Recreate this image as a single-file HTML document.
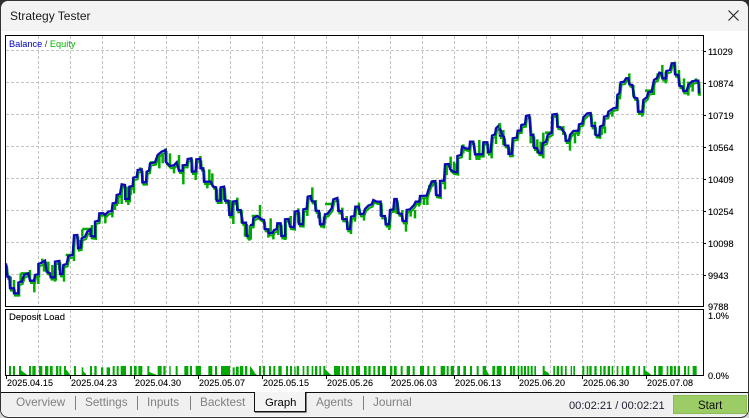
<!DOCTYPE html>
<html><head><meta charset="utf-8"><style>
html,body{margin:0;padding:0;width:749px;height:418px;overflow:hidden;background:#d8d8d8}
svg{display:block}
text{font-family:"Liberation Sans",sans-serif}
.d{font-size:9px;fill:#000;letter-spacing:.1px;stroke:#000;stroke-width:.12px}
.r{font-size:9.2px;fill:#000;stroke:#000;stroke-width:.12px}
.t{font-size:11.8px;fill:#808080}
</style></head><body>
<svg width="749" height="418" viewBox="0 0 749 418" xmlns="http://www.w3.org/2000/svg">
<rect width="749" height="200" fill="#2e2e2e"/>
<rect x="0.5" y="0.5" width="748" height="417" rx="8" fill="#ffffff" stroke="#333"/>
<path d="M1 31V9Q1 1 9 1H740Q748 1 748 9V31Z" fill="#f3f3f3"/>
<path d="M1 393H748V409Q748 416.500 740 416.500H9Q1 416.500 1 409Z" fill="#f0f0f0"/>
<text x="10" y="20" font-size="12" fill="#1a1a1a">Strategy Tester</text>
<path d="M728.500 10.500L738.500 20.500M738.500 10.500L728.500 20.500" stroke="#222" stroke-width="1.100" fill="none"/>

<!-- grid -->
<g stroke="#c4c4c4" stroke-width="1" stroke-dasharray="3 2" fill="none">
<path d="M6 50.500H703M6 82.500H703M6 114.500H703M6 146.500H703M6 178.500H703M6 210.500H703M6 242.500H703M6 274.500H703"/>
<path d="M38.500 36V306M70.500 36V306M102.500 36V306M134.500 36V306M166.500 36V306M198.500 36V306M230.500 36V306M262.500 36V306M294.500 36V306M326.500 36V306M358.500 36V306M390.500 36V306M422.500 36V306M454.500 36V306M486.500 36V306M518.500 36V306M550.500 36V306M582.500 36V306M614.500 36V306M646.500 36V306M678.500 36V306"/>
<path d="M38.500 310V375M70.500 310V375M102.500 310V375M134.500 310V375M166.500 310V375M198.500 310V375M230.500 310V375M262.500 310V375M294.500 310V375M326.500 310V375M358.500 310V375M390.500 310V375M422.500 310V375M454.500 310V375M486.500 310V375M518.500 310V375M550.500 310V375M582.500 310V375M614.500 310V375M646.500 310V375M678.500 310V375"/>
</g>

<!-- segment 1 -->
<g transform="translate(0,130) scale(.33333)" fill="none" stroke-linejoin="miter">
<g stroke="#00aa00" stroke-width="6" transform="translate(3,7)"><use href="#b1"/></g>
<path stroke="#00aa00" stroke-width="7.500" d="M32 440V475M42 450V490M55 480V498M62 430V455M62 430H85M90 420V450M103 450V487M115 430V462M127 386V400M132 400V425M145 395V430M157 405V450M165 420V455M178 390V420M192 405V455M197 375H215M222 355V393M240 330V360M247 298V320M247 297H272M276 285V320M316 255V280M337 228V262M345 220V240M355 195V222M365 165V222M385 170V225M392 170V195M402 165V190M417 116H425M440 125V160M450 97H465M478 75V115M488 70V100M497 55V70M510 70V110M522 105V130M537 75V120M550 105V163M575 85V125M587 120V150M601 78V118M622 155V175M628 118V155M637 130V170M648 170V210M660 175V210M672 168V210M690 210V255M700 215V282M712 203V240M725 240V280M735 280V320M748 320V332"/>
<g stroke="#0a0ab0" stroke-width="7"><polyline id="b1" points="18,400 22,440 28,440 30,475 42,475 42,490 55,490 55,458 65,455 72,435 85,430 90,452 102,452 105,435 115,432 115,402 125,398 135,392 140,425 150,430 152,442 165,442 165,395 178,393 180,432 188,432 190,405 200,402 205,378 218,375 222,316 232,315 234,355 242,353 245,325 255,320 262,305 272,298 272,318 285,320 285,275 296,272 298,250 310,250 315,255 325,245 335,243 338,220 348,218 350,195 360,192 365,163 375,165 375,207 387,207 388,170 398,168 400,143 410,141 413,120 425,118 427,157 438,157 440,125 447,122 450,100 465,97 473,75 485,65 497,60 497,95 510,108 522,106 530,97 537,122 548,122 548,106 560,105 563,87 574,85 576,125 587,124 589,88 601,87 603,115 610,115 612,155 632,155 640,170 648,172 650,212 662,212 662,172 672,170 675,212 685,212 688,255 695,255 698,215 710,213 712,240 722,240 727,278 738,278 740,318 750,318 750,285"/></g>
</g>
<!-- segment 2 -->
<g transform="translate(250,110) scale(.33333)" fill="none">
<g stroke="#00aa00" stroke-width="6" transform="translate(3,7)"><use href="#b2"/></g>
<path stroke="#00aa00" stroke-width="7.500" d="M0 345V390M5 318H22M30 285V325M55 375V383M62 325V365M70 370V388M85 340V375M105 378V390M122 318V350M133 350V358M145 295V340M160 325V350M172 300V318M187 232V270M197 270V302M205 310V325M222 320V355M225 282H245M277 293V325M290 318V330M303 330V372M315 315V335M327 278V315M342 310V332M392 280V318M418 343V360M428 295V305M440 267V312M457 300V333M468 335V365M482 300V320M495 300V325M507 270V290M522 262V285M532 255V285M538 225V245M548 210V230M567 255V262M585 215V238M590 165V195M602 140V175M612 155V192M620 160V195M640 103V130M660 120V150M680 135V150M688 90V150M700 130V143M725 95V145M738 75V102M748 40V60"/>
<g stroke="#0a0ab0" stroke-width="7"><polyline id="b2" points="0,345 8,345 10,325 22,318 35,328 42,330 44,357 55,358 55,370 68,368 72,360 80,358 82,340 92,340 94,378 105,378 105,328 115,327 120,350 132,352 134,305 145,303 147,342 158,343 160,298 170,296 173,260 182,258 185,273 195,275 197,302 207,303 210,343 220,343 225,313 232,312 245,295 250,268 262,264 265,303 275,303 277,327 290,328 292,357 300,357 303,320 313,318 316,290 326,290 330,312 340,312 345,297 355,287 365,283 370,270 380,275 392,275 394,318 405,318 407,343 417,343 420,300 430,298 433,267 440,267 445,310 455,312 458,333 468,333 470,300 480,298 492,285 497,275 508,275 510,258 530,257 535,240 545,215 556,213 558,255 570,257 570,213 582,212 585,163 597,162 600,177 610,185 622,187 622,138 633,135 636,110 648,115 658,117 660,95 670,95 675,133 698,133 700,97 712,97 714,127 722,125 726,77 735,73 738,55 748,45 750,80"/></g>
</g>
<!-- segment 3 -->
<g transform="translate(500,40) scale(.33333)" fill="none">
<g stroke="#00aa00" stroke-width="6" transform="translate(3,7)"><use href="#b3"/></g>
<path stroke="#00aa00" stroke-width="7.500" d="M0 250V285M10 270V315M25 315V345M40 345V348M55 270V285M92 285V310M100 280V320M112 298V340M122 305V340M130 278V355M135 278H155M172 222V255M190 258V285M210 290V332M225 280V310M235 270V288M250 245V255M285 245V285M305 255V285M315 260V280M337 210V230M360 130V178M388 100V125M400 135V170M427 215V230M435 152H455M462 125V165M473 100V125M487 75V115M497 95V130M525 65V90M537 90V135M552 115V158M565 125V167M578 120V155M588 115V125M597 125V167"/>
<g stroke="#0a0ab0" stroke-width="7"><polyline id="b3" points="0,265 8,288 12,290 14,315 25,317 27,342 35,342 38,295 50,293 53,272 62,272 64,255 75,253 78,228 88,226 92,285 100,285 102,323 112,325 115,338 125,340 128,310 138,305 143,285 155,278 157,224 170,222 172,260 182,262 195,280 197,302 207,302 210,285 220,273 235,272 237,253 247,250 250,232 262,220 272,219 275,258 285,258 287,285 298,287 300,260 310,255 312,230 322,228 325,215 340,205 350,203 352,165 358,160 362,127 372,125 378,115 385,115 388,133 397,135 402,172 412,175 414,215 427,215 430,180 440,172 445,157 455,155 462,120 470,115 478,98 485,100 487,115 497,115 499,93 510,90 515,70 523,70 525,103 535,105 538,137 548,140 550,153 560,153 565,135 575,125 585,122 595,122 597,160"/></g>
</g>

<!-- deposit load bars -->
<g transform="translate(0,290) scale(.33333)" fill="#00aa00">
<path d="M27 256V228H33V256ZM39 256V228H45V256ZM57 256V228H63V240L72 248L80 253V256ZM87 256V228H93V256ZM97 256V228H107V256ZM117 256V228H127V256ZM135 256V228H145V256ZM150 256V228H158V256ZM168 256V228H175V256ZM178 256V228H184V256ZM192 256V228H198V238L206 248L212 256ZM222 256V228H228V256ZM245 256V232H250V244L258 252V256ZM270 256V228H276V256ZM283 256V228H290V256ZM303 256V232H310V256ZM320 256V232H330V256ZM338 256V228H344V256ZM350 256V228H356V256ZM362 256V228H378V256ZM390 256V228H396V256ZM402 256V228H410V256ZM415 256V228H427V256ZM442 256V228H448V246L458 250L468 254V256ZM473 256V228H485V256ZM490 256V228H497V256ZM508 256V228H512V256ZM527 256V228H533V256ZM553 256V228H565V256ZM570 256V228H576V256ZM587 256V228H603V256ZM625 256V228H637V256ZM645 256V228H651V256ZM663 256V228H690V256ZM698 256V232H704V256ZM708 256V230H716V256ZM720 256V228H730V256ZM735 256V228H742V256Z"/>
</g>
<g transform="translate(250,290) scale(.33333)" fill="#00aa00">
<path d="M0 256V228L8 238L15 250L22 256ZM27 256V228H33V256ZM39 256V228H45V256ZM57 256V228H63V256ZM70 256V228H76V256ZM85 256V228H95V256ZM108 256V228H114V256ZM120 256V228H126V256ZM133 256V230H137V256ZM140 256V228H147V256ZM158 256V228H163V256ZM170 256V228H176V256ZM185 256V228H190V256ZM195 256V228H202V256ZM208 256V228H213V256ZM220 256V228H226V238L236 248L245 256ZM252 256V228H270V256ZM275 256V228H281V256ZM288 256V228H296V256ZM305 256V228H311V256ZM318 256V228H330V256ZM342 256V228H350V256ZM355 256V228H362V256ZM370 256V228H376V256ZM383 256V228H390V256ZM396 256V228H408V256ZM420 256V228H427V256ZM432 256V228H440V256ZM452 256V228H458V256ZM470 256V228H480V256ZM488 256V228H494V256ZM510 256V228H522V256ZM532 256V228H538V256ZM550 256V228H556V256ZM572 256V228H585V256ZM590 256V228H596V256ZM602 256V228H612V256ZM622 256V228H630V256ZM640 256V228H648V256ZM660 256V228H666V256ZM680 256V228H686V256ZM698 256V228H708V238L718 256ZM727 256V228H735V256ZM740 256V228H750V256Z"/>
</g>
<g transform="translate(500,290) scale(.33333)" fill="#00aa00">
<path d="M0 256V228H5V256ZM12 256V228H18V256ZM30 256V228H36V256ZM38 256V228H45V256ZM53 256V228H58V256ZM62 256V228H68V256ZM72 256V228H78V256ZM82 256V228H88V256ZM92 256V228H98V256ZM103 256V228H108V256ZM128 256V228H134V242L144 248L150 256ZM160 256V228H165V256ZM170 256V228H177V256ZM182 256V228H188V256ZM195 256V228H200V256ZM212 256V228H216V256ZM220 256V228H225V256ZM247 256V228H253V256ZM260 256V228H265V256ZM268 256V228H275V256ZM283 256V228H290V256ZM300 256V228H305V256ZM310 256V228H317V256ZM323 256V228H330V256ZM335 256V228H340V256ZM350 256V228H355V256ZM365 256V228H370V256ZM378 256V228H388V256ZM398 256V228H405V256ZM415 256V228H420V256ZM430 256V228H436V242L446 248L455 256ZM462 256V228H468V256ZM475 256V228H488V256ZM500 256V228H505V256ZM510 256V228H518V256ZM522 256V228H528V256ZM533 256V228H540V256ZM552 256V228H558V256ZM563 256V228H568V256ZM578 256V228H590V256Z"/>
</g>

<!-- frames -->
<g fill="none" stroke="#000" stroke-width="1">
<rect x="5.500" y="35.500" width="698" height="271"/>
<rect x="5.500" y="309.500" width="698" height="66"/>
<path d="M704 51.500H706M704 83.500H706M704 115.500H706M704 147.500H706M704 179.500H706M704 211.500H706M704 243.500H706M704 275.500H706"/>
<path d="M6.500 376V379M70.500 376V379M134.500 376V379M198.500 376V379M262.500 376V379M326.500 376V379M390.500 376V379M454.500 376V379M518.500 376V379M582.500 376V379M646.500 376V379"/>
</g>

<text x="9" y="47" font-size="9.200"><tspan fill="#0000c8">Balance</tspan><tspan fill="#333"> / </tspan><tspan fill="#00b400">Equity</tspan></text>
<text x="9" y="320" font-size="9.500" fill="#000" stroke="#000" stroke-width=".1">Deposit Load</text>

<text class="r" x="708" y="55">11029</text>
<text class="r" x="708" y="87">10874</text>
<text class="r" x="708" y="119">10719</text>
<text class="r" x="708" y="151">10564</text>
<text class="r" x="708" y="183">10409</text>
<text class="r" x="708" y="215">10254</text>
<text class="r" x="708" y="247">10098</text>
<text class="r" x="708" y="279">9943</text>
<text class="r" x="708" y="310">9788</text>
<rect x="706" y="311" width="40" height="9" fill="#fff"/>
<text class="r" x="708" y="319">1.0%</text>
<text class="r" x="708" y="379">0.0%</text>

<text class="d" x="7" y="386">2025.04.15</text>
<text class="d" x="71" y="386">2025.04.23</text>
<text class="d" x="135" y="386">2025.04.30</text>
<text class="d" x="199" y="386">2025.05.07</text>
<text class="d" x="263" y="386">2025.05.15</text>
<text class="d" x="327" y="386">2025.05.26</text>
<text class="d" x="391" y="386">2025.06.03</text>
<text class="d" x="455" y="386">2025.06.13</text>
<text class="d" x="519" y="386">2025.06.20</text>
<text class="d" x="583" y="386">2025.06.30</text>
<text class="d" x="647" y="386">2025.07.08</text>

<!-- tab bar -->
<path d="M1 392.500H748" stroke="#111" fill="none"/>
<text class="t" x="16" y="406">Overview</text>
<text class="t" x="85" y="406">Settings</text>
<text class="t" x="147" y="406">Inputs</text>
<text class="t" x="200" y="406">Backtest</text>
<path d="M75.500 396V410M137.500 396V410M190.500 396V410M363.500 396V410" stroke="#808080" fill="none"/>
<path d="M254.500 392V411.500H305.500V392" fill="#f4f4f4" stroke="#111"/>
<path d="M306 393V412H255" fill="none" stroke="#111"/>
<text x="265" y="406" font-size="11.300" fill="#000">Graph</text>
<text class="t" x="316" y="406">Agents</text>
<text class="t" x="373" y="406">Journal</text>
<text x="569" y="409" font-size="11.100" fill="#1c1c30">00:02:21 / 00:02:21</text>
<rect x="673.500" y="395.500" width="73" height="18" fill="#9ccc65" stroke="#8dbb58"/>
<text x="698" y="409" font-size="11.500" fill="#111">Start</text>
</svg>
</body></html>
